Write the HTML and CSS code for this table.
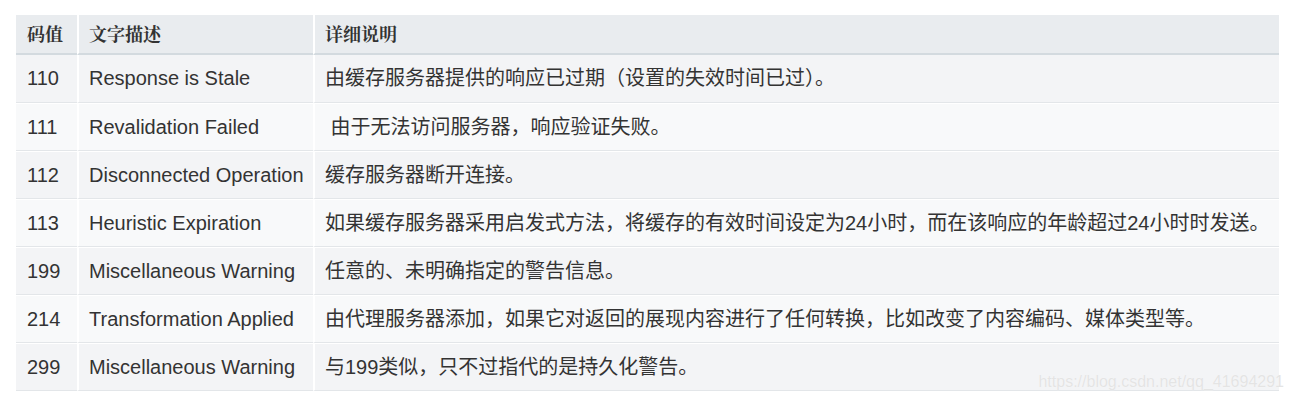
FILE: index.html
```html
<!DOCTYPE html>
<html lang="zh">
<head>
<meta charset="utf-8">
<title>HTTP 警告码</title>
<link rel="stylesheet" href="styles.css">
</head>
<body>
<div class="page">
  <table class="codes">
    <colgroup>
      <col class="c-code">
      <col class="c-name">
      <col class="c-desc">
    </colgroup>
    <thead>
      <tr><th>码值</th><th>文字描述</th><th>详细说明</th></tr>
    </thead>
    <tbody>
      <tr><td>110</td><td>Response is Stale</td><td>由缓存服务器提供的响应已过期（设置的失效时间已过）。</td></tr>
      <tr><td>111</td><td>Revalidation Failed</td><td>&nbsp;由于无法访问服务器，响应验证失败。</td></tr>
      <tr><td>112</td><td>Disconnected Operation</td><td>缓存服务器断开连接。</td></tr>
      <tr><td>113</td><td>Heuristic Expiration</td><td>如果缓存服务器采用启发式方法，将缓存的有效时间设定为24小时，而在该响应的年龄超过24小时时发送。</td></tr>
      <tr><td>199</td><td>Miscellaneous Warning</td><td>任意的、未明确指定的警告信息。</td></tr>
      <tr><td>214</td><td>Transformation Applied</td><td>由代理服务器添加，如果它对返回的展现内容进行了任何转换，比如改变了内容编码、媒体类型等。</td></tr>
      <tr><td>299</td><td>Miscellaneous Warning</td><td>与199类似，只不过指代的是持久化警告。</td></tr>
    </tbody>
  </table>
  <div class="watermark">https://blog.csdn.net/qq_41694291</div>
</div>
</body>
</html>
```
FILE: styles.css
```css
html, body {
  margin: 0;
  padding: 0;
  background: #fff;
}
.page {
  position: relative;
  padding: 15px 14px 0 16px;
  font-family: "Liberation Sans", Arial, "Noto Sans CJK SC", sans-serif;
  color: #333;
}
.codes {
  width: 1263px;
  border-collapse: separate;
  border-spacing: 0;
  table-layout: fixed;
}
.c-code { width: 61px; }
.c-name { width: 236px; }
.c-desc { width: auto; }
.codes th,
.codes td {
  text-align: left;
  white-space: nowrap;
  padding: 0 0 0 10px;
  border-left: 2px solid #fff;
}
.codes th:first-child,
.codes td:first-child {
  border-left: 0;
  padding-left: 11px;
}
.codes th {
  height: 36px;
  background: #e9ecef;
  border-bottom: 2px solid #d3dadf;
  font-family: "Noto Serif CJK SC", "Noto Sans CJK SC", serif;
  font-size: 18px;
  font-weight: 700;
  color: #333;
  padding-top: 0;
  padding-bottom: 2px;
}
.codes td {
  height: 45px;
  padding-bottom: 1px;
  font-size: 20px;
  line-height: 24px;
  border-top: 1px solid #fff;
  border-bottom: 1px solid #e3e6e9;
  background: #f3f4f6;
}
.codes tbody tr:nth-child(2n) td {
  background: #f8f9fa;
}
.codes tbody tr:first-child td {
  border-top: 0;
  height: 46px;
}
.watermark {
  position: absolute;
  right: 9px;
  top: 373px;
  font-family: "Liberation Sans", Arial, sans-serif;
  font-size: 16px;
  color: #e4e4e4;
  text-shadow: 0 0 1px rgba(255, 255, 255, 0.9);
}
```
